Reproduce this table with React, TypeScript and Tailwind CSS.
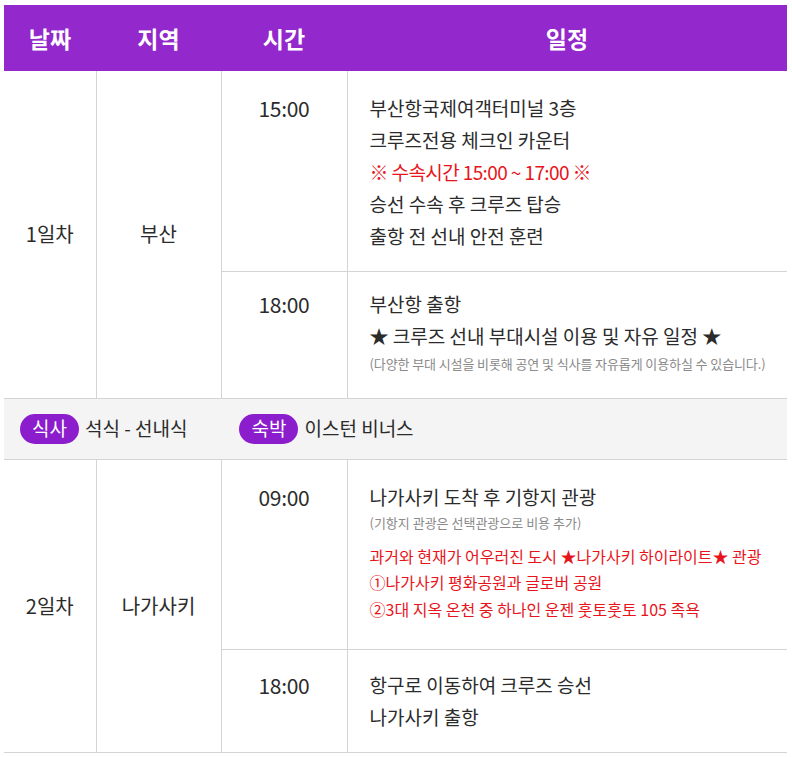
import React from "react";

const font = { fontFamily: '"Noto Sans CJK KR", "Noto Sans", sans-serif' };

type Line = { text: string; tone?: "base" | "red" | "note" };

const Lines = ({ lines }: { lines: Line[] }) => (
  <div className="flex flex-col">
    {lines.map((l, i) => {
      if (l.tone === "red")
        return (
          <div key={i} className="text-[19px] leading-[32px] tracking-[-0.6px] text-[#e8141b]">
            {l.text}
          </div>
        );
      if (l.tone === "note")
        return (
          <div key={i} className="text-[13px] leading-[24px] tracking-[-0.1px] text-[#8a8a8a]">
            {l.text}
          </div>
        );
      return (
        <div key={i} className="text-[19px] leading-[32px] text-[#2b2b2b]">
          {l.text}
        </div>
      );
    })}
  </div>
);

const Pill = ({ children }: { children: React.ReactNode }) => (
  <span className="inline-flex items-center h-[30px] px-[12px] rounded-full bg-[#8b1dcc] text-white text-[19px]">
    {children}
  </span>
);

export default function App() {
  const cell = "border-[#d4d4d4]";
  const head = "text-[23px] font-bold";
  const label = "text-center text-[20px] text-[#2b2b2b]";
  const time = "align-top text-center text-[21px] leading-[32px] tracking-[-0.3px] text-[#2b2b2b]";
  return (
    <div className="bg-white w-[792px] h-[757px] pt-[5px] px-[4px]" style={font}>
      <table className="w-[783px] border-collapse table-fixed">
        <colgroup>
          <col className="w-[92px]" />
          <col className="w-[125px]" />
          <col className="w-[126px]" />
          <col className="w-[440px]" />
        </colgroup>
        <thead>
          <tr className="bg-[#9328cc] text-white h-[66px]">
            <th className={head}>날짜</th>
            <th className={head}>지역</th>
            <th className={head}>시간</th>
            <th className={head}>일정</th>
          </tr>
        </thead>
        <tbody>
          <tr className="h-[200px]">
            <td rowSpan={2} className={`${label} ${cell} border-b`}>1일차</td>
            <td rowSpan={2} className={`${label} ${cell} border-x border-b`}>부산</td>
            <td className={`${time} pt-[21px] ${cell} border-r border-b`}>15:00</td>
            <td className={`align-top pt-[21px] pl-[22px] ${cell} border-b`}>
              <Lines
                lines={[
                  { text: "부산항국제여객터미널 3층" },
                  { text: "크루즈전용 체크인 카운터" },
                  { text: "※ 수속시간 15:00 ~ 17:00 ※", tone: "red" },
                  { text: "승선 수속 후 크루즈 탑승" },
                  { text: "출항 전 선내 안전 훈련" },
                ]}
              />
            </td>
          </tr>
          <tr className="h-[127px]">
            <td className={`${time} pt-[16px] ${cell} border-r border-b`}>18:00</td>
            <td className={`align-top pt-[16px] pl-[22px] ${cell} border-b`}>
              <Lines
                lines={[
                  { text: "부산항 출항" },
                  { text: "★ 크루즈  선내 부대시설 이용 및 자유 일정 ★" },
                  { text: "(다양한 부대 시설을 비롯해 공연 및 식사를 자유롭게 이용하실 수 있습니다.)", tone: "note" },
                ]}
              />
            </td>
          </tr>
          <tr className="h-[61px] bg-[#f4f4f4]">
            <td colSpan={4} className={`${cell} border-b pl-[16px]`}>
              <div className="flex items-center text-[19px] text-[#2b2b2b]">
                <Pill>식사</Pill>
                <span className="ml-[6px]">석식 - 선내식</span>
                <span className="ml-[52px]"><Pill>숙박</Pill></span>
                <span className="ml-[6px]">이스턴 비너스</span>
              </div>
            </td>
          </tr>
          <tr className="h-[190px]">
            <td rowSpan={2} className={`${label} ${cell} border-b`}>2일차</td>
            <td rowSpan={2} className={`${label} ${cell} border-x border-b`}>나가사키</td>
            <td className={`${time} pt-[21px] ${cell} border-r border-b`}>09:00</td>
            <td className={`align-top pt-[21px] pl-[22px] ${cell} border-b`}>
              <div className="text-[19px] leading-[32px] text-[#2b2b2b]">나가사키 도착 후 기항지 관광</div>
              <div className="text-[13px] leading-[20px] text-[#8a8a8a]">(기항지 관광은 선택관광으로 비용 추가)</div>
              <div className="mt-[10px] flex flex-col text-[16px] leading-[26.5px] text-[#e8141b]">
                <div>과거와 현재가 어우러진 도시 ★나가사키 하이라이트★ 관광</div>
                <div>①나가사키 평화공원과 글로버 공원</div>
                <div>②3대 지옥 온천 중 하나인 운젠 훗토훗토 105 족욕</div>
              </div>
            </td>
          </tr>
          <tr className="h-[103px]">
            <td className={`${time} pt-[19px] ${cell} border-r border-b`}>18:00</td>
            <td className={`align-top pt-[19px] pl-[22px] ${cell} border-b`}>
              <div className="text-[19px] leading-[32px] text-[#2b2b2b]">항구로 이동하여 크루즈 승선</div>
              <div className="text-[19px] leading-[32px] text-[#2b2b2b]">나가사키 출항</div>
            </td>
          </tr>
        </tbody>
      </table>
    </div>
  );
}
